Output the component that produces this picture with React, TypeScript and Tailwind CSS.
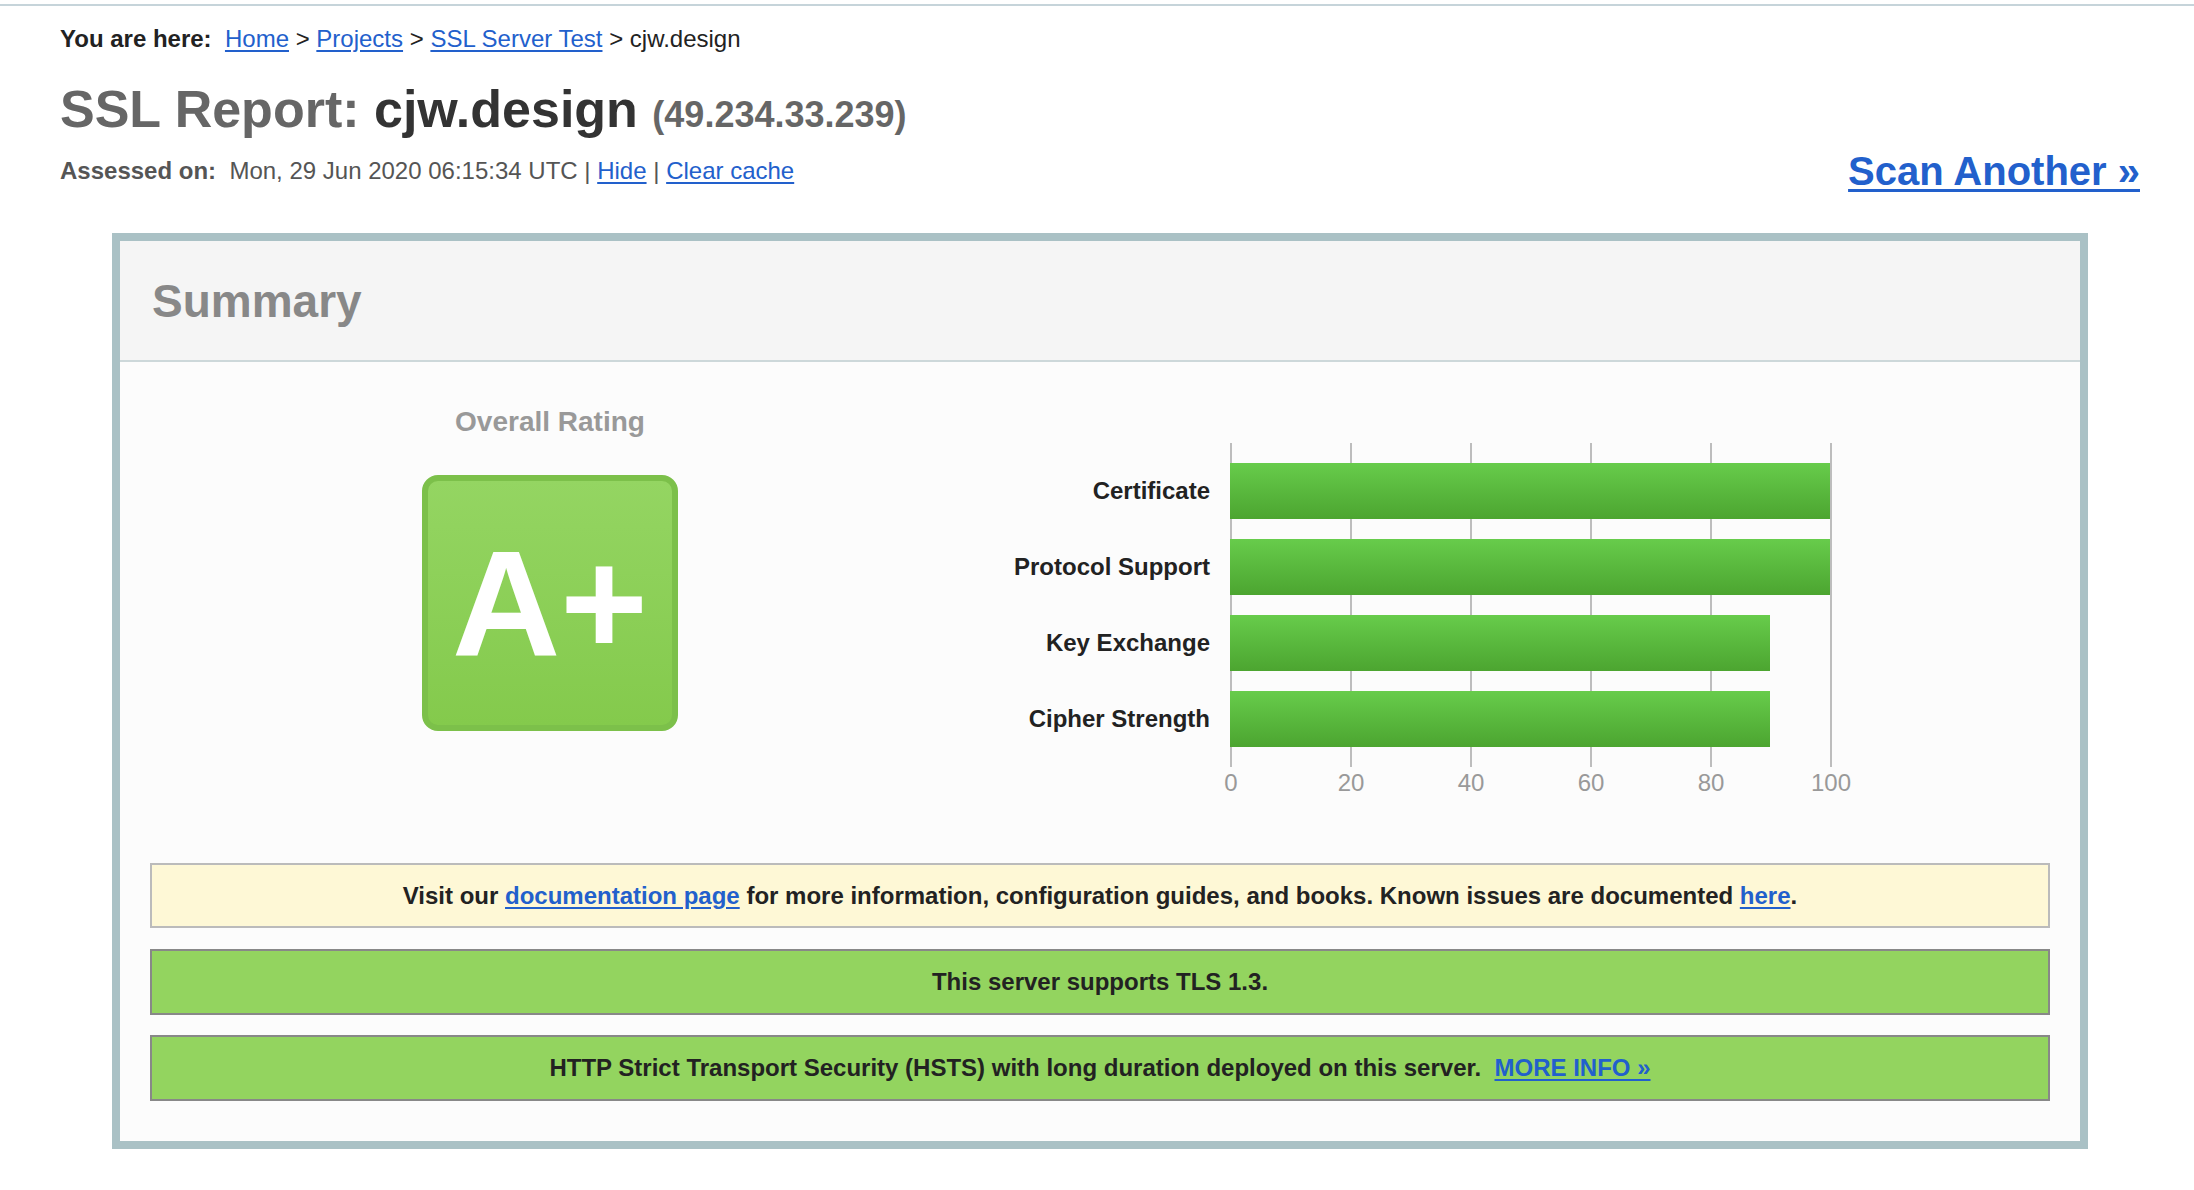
import React from 'react';

const bars = [
  { label: 'Certificate', value: 100 },
  { label: 'Protocol Support', value: 100 },
  { label: 'Key Exchange', value: 90 },
  { label: 'Cipher Strength', value: 90 },
];

const ticks = [0, 20, 40, 60, 80, 100];

function Link({ children }: { children: React.ReactNode }) {
  return <a href="#" className="text-[#2260cc] underline underline-offset-[3px]">{children}</a>;
}

function Chart() {
  return (
    <div className="mt-[35px] flex">
      <div className="w-[260px] flex flex-col gap-[20px] py-[20px] mr-[20px]">
        {bars.map((b) => (
          <div key={b.label} className="h-[56px] flex items-center justify-end text-[24px] font-bold text-[#222]">
            {b.label}
          </div>
        ))}
      </div>
      <div className="w-[602px]">
        <div className="relative h-[324px]">
          {ticks.map((t, i) => (
            <div key={t} className="absolute top-0 bottom-0 w-[2px] bg-[#bdbdbd]" style={{ left: i * 120 }} />
          ))}
          <div className="relative flex flex-col gap-[20px] py-[20px]">
            {bars.map((b) => (
              <div
                key={b.label}
                className="h-[56px] bg-linear-to-b from-[#67cc4b] to-[#4ca530]"
                style={{ width: b.value * 6 }}
              />
            ))}
          </div>
        </div>
        <div className="relative mt-[2px] h-[28px] text-[24px] leading-[28px] text-[#999]">
          {ticks.map((t, i) => (
            <span key={t} className="absolute top-0 -translate-x-1/2" style={{ left: i * 120 + 1 }}>
              {t}
            </span>
          ))}
        </div>
      </div>
    </div>
  );
}

export default function App() {
  return (
    <div className="min-h-[1190px] bg-white font-['Liberation_Sans',Arial,sans-serif]">
      <div className="h-[4px]" />
      <div className="h-[2px] bg-[#c6d4da]" />
      <div className="pl-[60px] pr-[54px]">
        <div className="mt-[19px] text-[24px] leading-[28px] text-[#222]">
          <span className="font-bold">You are here:</span>{'\u00a0 '}
          <Link>Home</Link> &gt; <Link>Projects</Link> &gt; <Link>SSL Server Test</Link> &gt; cjw.design
        </div>
        <h1 className="mt-[26px] text-[52px] leading-[60px] font-bold text-[#666]">
          SSL Report: <span className="text-[#333]">cjw.design</span>{' '}
          <span className="text-[36px]">(49.234.33.239)</span>
        </h1>
        <div className="mt-[3px] flex items-start justify-between">
          <div className="mt-[9px] text-[24px] leading-[28px] text-[#555]">
            <span className="font-bold">Assessed on:</span>{'\u00a0 '}Mon, 29 Jun 2020 06:15:34 UTC |{' '}
            <Link>Hide</Link> | <Link>Clear cache</Link>
          </div>
          <a href="#" className="text-[40px] leading-[46px] font-bold text-[#2260cc] underline decoration-[3px] underline-offset-[4px]">
            Scan Another »
          </a>
        </div>

        <div className="mx-[52px] mt-[39px] border-8 border-[#aac1c5] bg-[#fcfcfc]">
          <div className="h-[121px] flex items-center pl-[32px] bg-[#f5f5f5] border-b-2 border-[#cdd8da]">
            <h2 className="text-[46px] leading-none font-bold text-[#888]">Summary</h2>
          </div>
          <div className="px-[30px] pt-[46px] pb-[40px]">
            <div className="flex items-start">
              <div className="w-[800px] flex flex-col items-center">
                <div className="text-[28px] leading-none font-bold text-[#999]">Overall Rating</div>
                <div className="mt-[39px] w-[256px] h-[256px] rounded-[16px] border-[6px] border-[#7cc04a] bg-linear-to-b from-[#94d562] to-[#84ca4c] flex items-center justify-center">
                  <span className="text-[150px] leading-none font-bold text-white">A+</span>
                </div>
              </div>
              <Chart />
            </div>

            <div className="mt-[66px] flex flex-col">
              <div className="h-[65px] flex items-center justify-center border-2 border-[#bbb] bg-[#fef8d6] text-[24px] font-bold text-[#222]">
                <span>
                  Visit our <Link>documentation page</Link> for more information, configuration guides, and books. Known issues are documented <Link>here</Link>.
                </span>
              </div>
              <div className="mt-[21px] h-[66px] flex items-center justify-center border-2 border-[#888] bg-[#93d45f] text-[24px] font-bold text-[#222]">
                This server supports TLS 1.3.
              </div>
              <div className="mt-[20px] h-[66px] flex items-center justify-center border-2 border-[#888] bg-[#93d45f] text-[24px] font-bold text-[#222]">
                <span>
                  HTTP Strict Transport Security (HSTS) with long duration deployed on this server.{'\u00a0 '}
                  <Link>MORE INFO »</Link>
                </span>
              </div>
            </div>
          </div>
        </div>
      </div>
    </div>
  );
}
